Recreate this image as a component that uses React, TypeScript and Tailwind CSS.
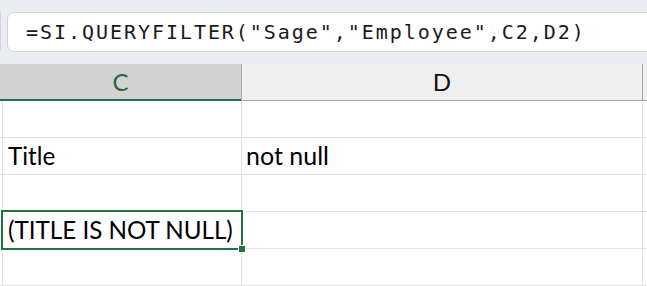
import React from 'react';

const rows = [
  { c: '', d: '' },
  { c: 'Title', d: 'not null' },
  { c: '', d: '' },
  { c: '(TITLE IS NOT NULL)', d: '' },
  { c: '', d: '' },
];

export default function App() {
  return (
    <div className="relative w-[647px] h-[286px] overflow-hidden bg-white font-['Lato',sans-serif]">
      {/* Formula bar */}
      <div className="flex h-[64px] bg-[#e9ecf0] pt-[12px]">
        <div className="w-[2px] h-[39px] bg-white border-r border-[#d4d4d4] rounded-r-[3px]" />
        <div className="ml-[6px] w-[680px] h-[40px] shrink-0 flex items-center bg-white border border-[#d3d3d3] rounded-[7px] pl-[18px]">
          <span className="font-['DejaVu_Sans_Mono',monospace] text-[20px] tracking-[1.95px] text-[#1a1a1a] whitespace-nowrap">
            =SI.QUERYFILTER("Sage","Employee",C2,D2)
          </span>
        </div>
      </div>

      {/* Column headers */}
      <div className="flex h-[37px]">
        <div className="w-[241px] shrink-0 flex items-center justify-center bg-[#d2d2d2] border-b-2 border-[#217346] text-[24px] text-[#1d6b3e]">
          C
        </div>
        <div className="w-[402px] shrink-0 flex items-center justify-center bg-[#efefef] border-l border-r border-b border-[#a8a8a8] text-[24px] text-[#111]">
          D
        </div>
        <div className="flex-1 bg-[#efefef] border-b border-[#a8a8a8]" />
      </div>

      {/* Grid */}
      {rows.map((r, i) => (
        <div key={i} className="flex h-[37px]">
          <div className="w-[2px] shrink-0 border-b border-[#e1e1e1]" />
          <div className="w-[240px] shrink-0 flex items-end border-l border-r border-b border-[#e1e1e1] pl-[5px] pb-[6px] text-[24.2px] leading-none text-black whitespace-nowrap">
            {r.c}
          </div>
          <div className="w-[401px] shrink-0 flex items-end border-r border-b border-[#e1e1e1] pl-[4px] pb-[6px] text-[25px] leading-none text-black whitespace-nowrap">
            {r.d}
          </div>
          <div className="flex-1 border-b border-[#e1e1e1]" />
        </div>
      ))}

      {/* Selected cell */}
      <div className="absolute left-[1px] top-[210px] w-[242px] h-[40px] border-2 border-[#217346]">
        <div className="absolute right-[-5px] bottom-[-5px] w-[8px] h-[8px] bg-[#217346] border border-white" />
      </div>
    </div>
  );
}
